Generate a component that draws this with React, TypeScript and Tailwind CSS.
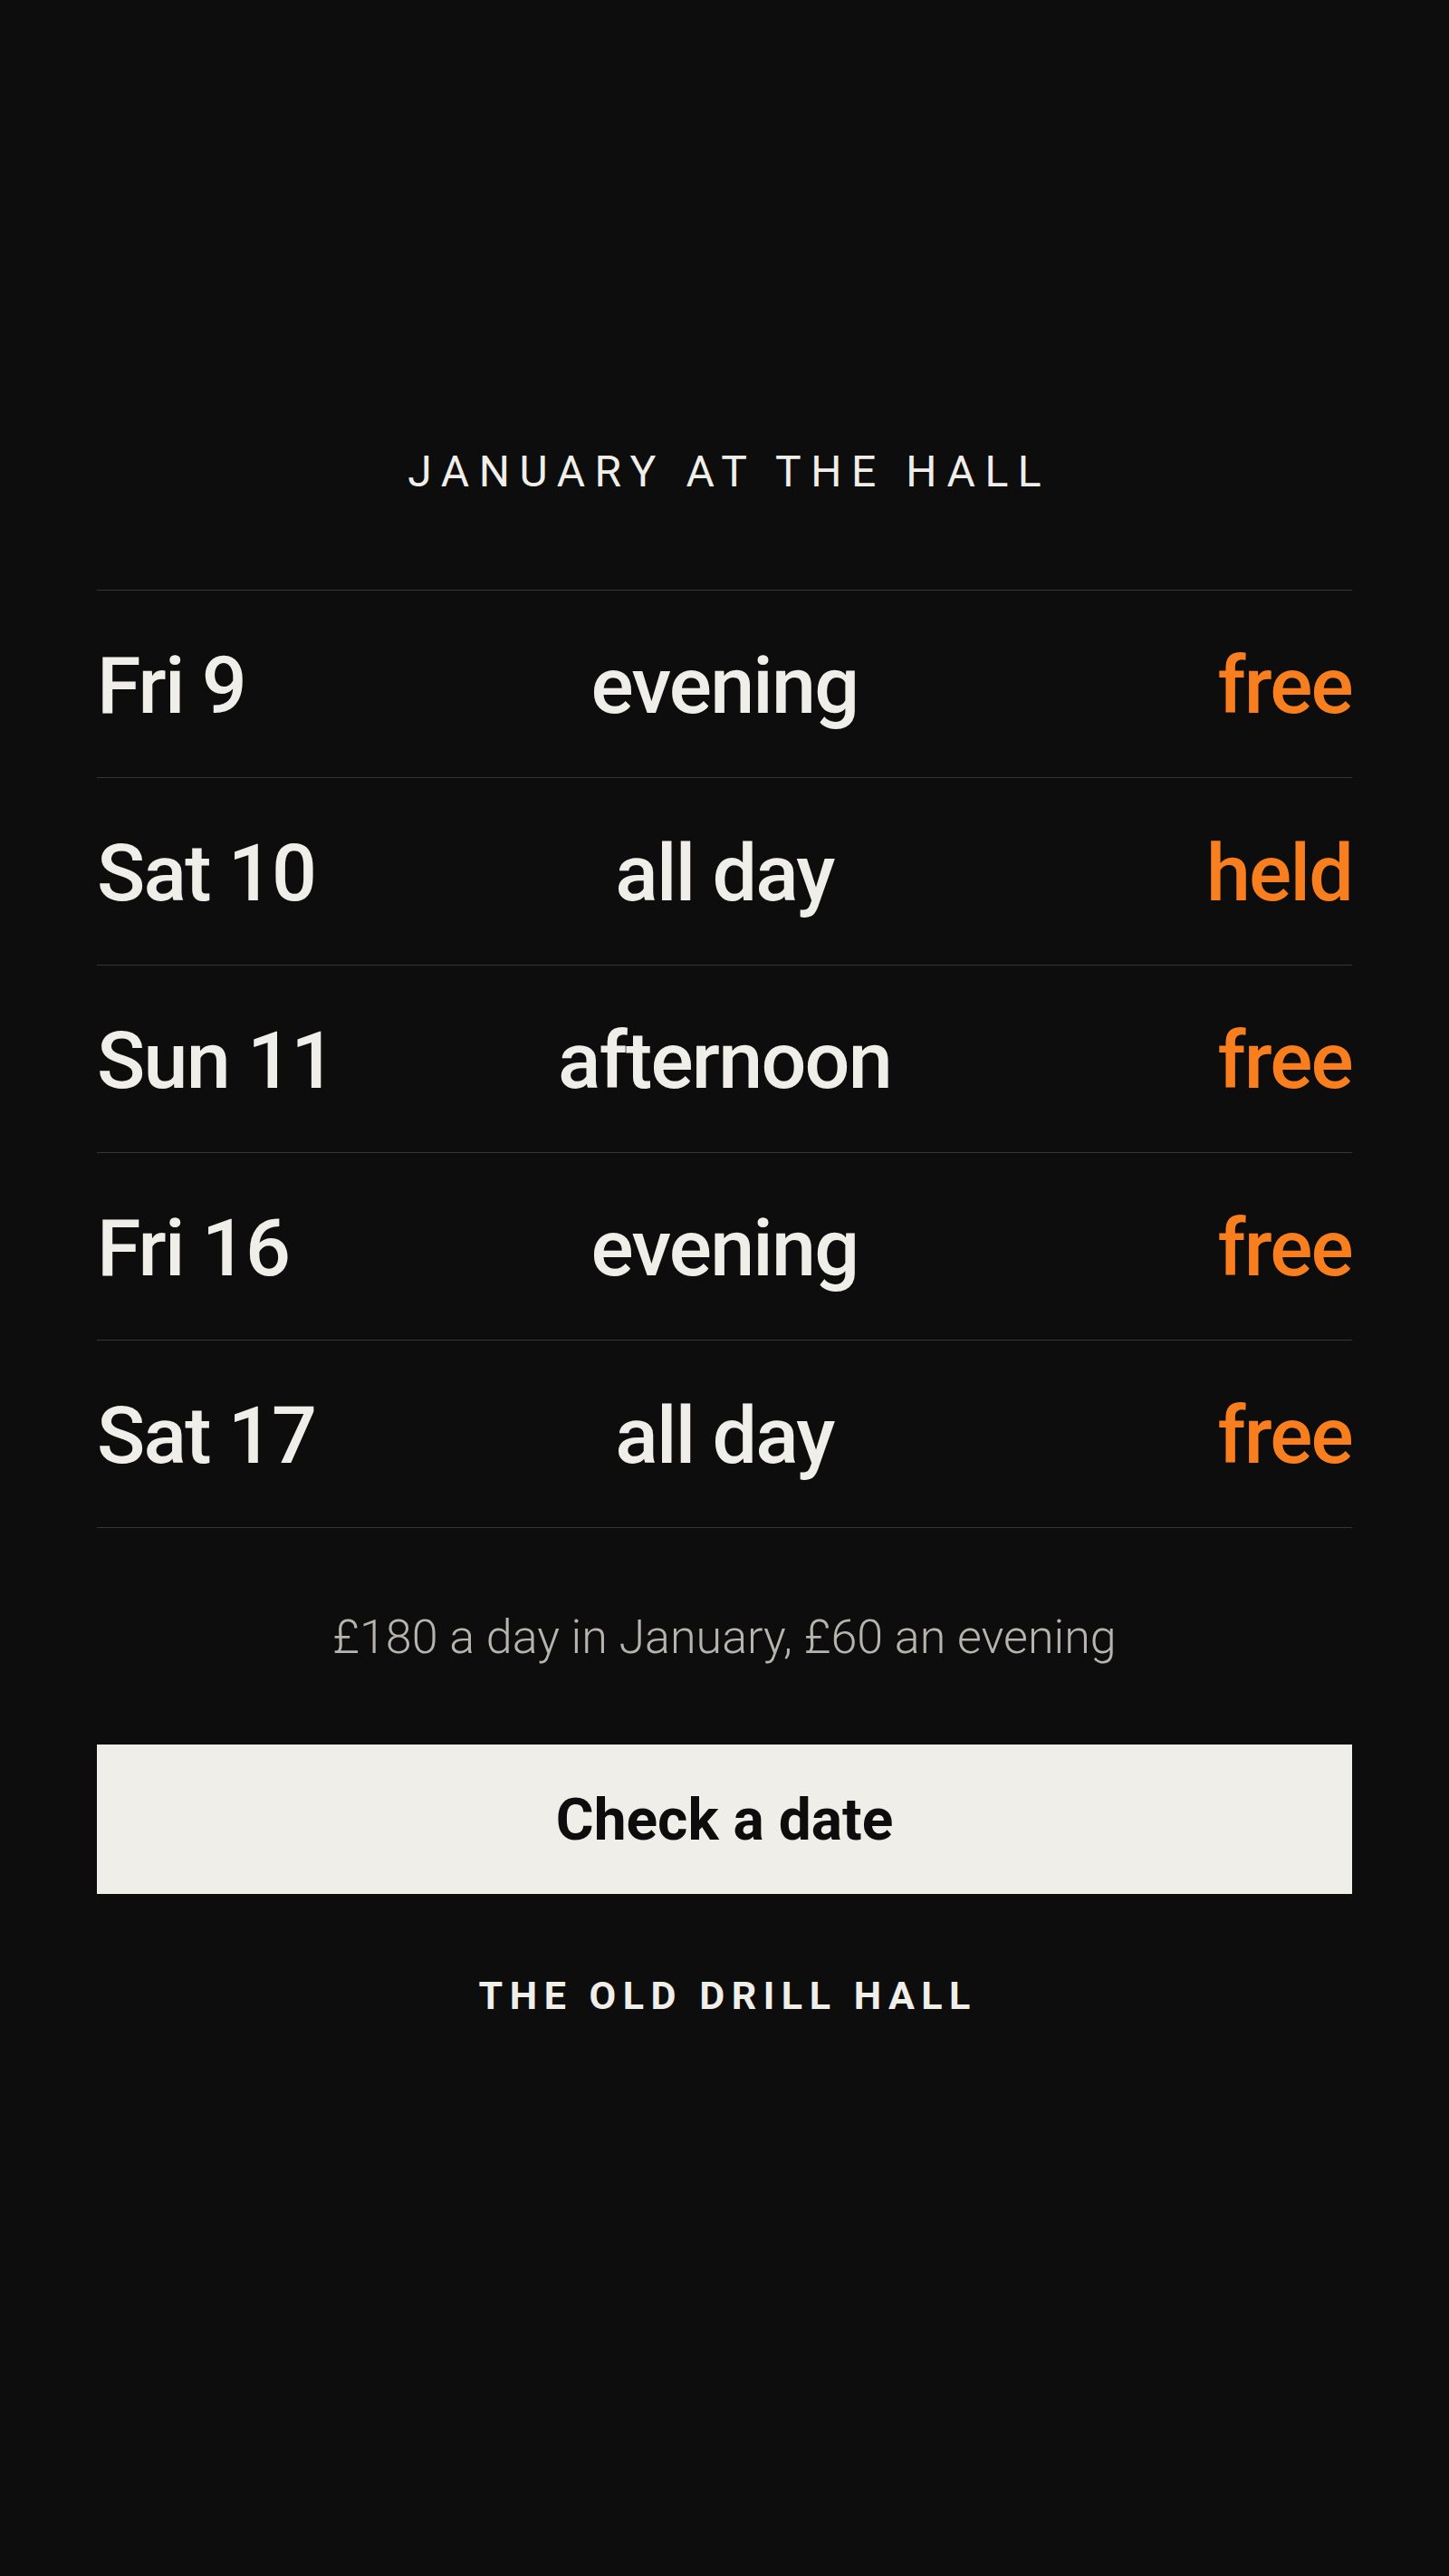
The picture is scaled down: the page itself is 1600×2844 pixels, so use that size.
import React from 'react';

interface Slot {
  date: string;
  time: string;
  status: string;
}

const SLOTS: Slot[] = [
  { date: 'Fri 9', time: 'evening', status: 'free' },
  { date: 'Sat 10', time: 'all day', status: 'held' },
  { date: 'Sun 11', time: 'afternoon', status: 'free' },
  { date: 'Fri 16', time: 'evening', status: 'free' },
  { date: 'Sat 17', time: 'all day', status: 'free' },
];

const App: React.FC = () => {
  return (
    <main className="min-h-[2844px] bg-[#0d0d0d] px-[107px] pt-[497px] font-['Roboto','Liberation_Sans',sans-serif] text-[#f0eee9]">
      <h1 className="pl-[0.22em] text-center text-[48px] leading-none tracking-[0.22em]">
        JANUARY AT THE HALL
      </h1>

      <div className="mt-[106px] border-t border-[#363636]">
        {SLOTS.map((s) => (
          <div
            key={s.date}
            className="grid h-[207px] grid-cols-3 items-center border-b border-[#363636] pt-[4px] text-[88px] font-medium leading-none tracking-[-0.02em]"
          >
            <span className="text-left">{s.date}</span>
            <span className="text-center">{s.time}</span>
            <span className="text-right text-[#f97f1e]">{s.status}</span>
          </div>
        ))}
      </div>

      <p className="mt-[95px] text-center text-[52px] font-light leading-none text-[#b7b4ad]">
        £180 a day in January, £60 an evening
      </p>

      <button className="mt-[92px] flex h-[165px] w-full items-center justify-center bg-[#f0eee9] pt-[3px] text-[64px] font-bold leading-none text-[#0d0d0d]">
        Check a date
      </button>

      <p className="mt-[91px] pl-[0.175em] text-center text-[43px] font-bold leading-none tracking-[0.175em]">
        THE OLD DRILL HALL
      </p>
    </main>
  );
};

export default App;
